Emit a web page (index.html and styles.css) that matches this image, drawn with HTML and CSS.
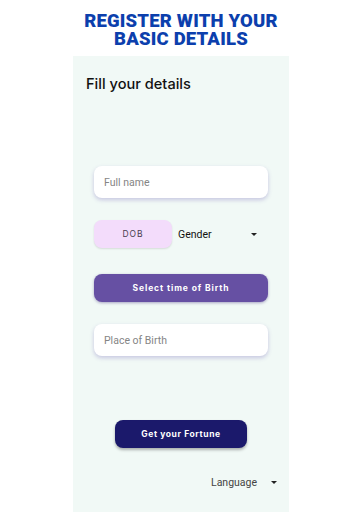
FILE: index.html
```html
<!DOCTYPE html>
<html lang="en">
<head>
  <meta charset="UTF-8" />
  <meta name="viewport" content="width=device-width, initial-scale=1.0" />
  <title>Register</title>
  <link rel="stylesheet" href="styles.css">
</head>
<body>
  <h1 class="title">REGISTER WITH YOUR<br>BASIC DETAILS</h1>
  <div class="panel">
    <h2 class="heading">Fill your details</h2>
    <div class="form">
      <input class="field" type="text" placeholder="Full name" />
      <div class="row">
        <button class="dob">DOB</button>
        <div class="select gender">
          <span>Gender</span>
          <span class="caret"></span>
        </div>
      </div>
      <button class="time-btn">Select time of Birth</button>
      <input class="field" type="text" placeholder="Place of Birth" />
    </div>
    <button class="fortune-btn">Get your Fortune</button>
    <div class="select language">
      <span>Language</span>
      <span class="caret"></span>
    </div>
  </div>
</body>
</html>
```

FILE: styles.css
```css
:root {
  --title: #0c3fad;
  --panel: #f1f9f6;
  --dob: #f3dcfb;
  --purple: #6650a3;
  --navy: #1b196b;
}
body {
  margin: 0;
  background: #fff;
  font-family: Roboto, "Noto Sans", sans-serif;
  color: #111;
}
.title {
  margin: 0;
  padding-top: 13px;
  text-align: center;
  font-family: Roboto, sans-serif;
  font-weight: 900;
  font-size: 18.5px;
  line-height: 17.5px;
  letter-spacing: 0.2px;
  color: var(--title);
}
.panel {
  width: 216px;
  margin: 8px 0 0 73px;
  min-height: 456px;
  background: var(--panel);
  box-sizing: border-box;
  padding: 18px 0 0;
}
.heading {
  margin: 0 0 0 13px;
  font-family: Inter, sans-serif;
  font-weight: 500;
  font-size: 14.6px;
  line-height: 20px;
}
.form {
  display: flex;
  flex-direction: column;
  margin: 72px 21px 0;
}
.field {
  height: 32px;
  border: none;
  border-radius: 8px;
  background: #fff;
  box-shadow: 0 2px 4px rgba(90, 70, 170, 0.28);
  padding: 0 10px;
  font-family: Roboto, sans-serif;
  font-size: 10.5px;
  color: #333;
  outline: none;
}
.field::placeholder {
  color: #858585;
}
.row {
  display: flex;
  align-items: center;
  gap: 6px;
  margin: 22px 0 26px;
}
button {
  border: none;
  cursor: pointer;
  font-family: Inter, sans-serif;
}
.dob {
  width: 78px;
  height: 28px;
  border-radius: 8px;
  background: var(--dob);
  font-size: 8.5px;
  letter-spacing: 1px;
  color: #4a4050;
  box-shadow: 0 1px 2px rgba(0, 0, 0, 0.12);
}
.select {
  display: flex;
  align-items: center;
  justify-content: space-between;
  font-family: Roboto, sans-serif;
  font-size: 10.5px;
}
.gender {
  flex: 1;
  padding-right: 11px;
  color: #111;
}
.caret {
  width: 0;
  height: 0;
  border-left: 3px solid transparent;
  border-right: 3px solid transparent;
  border-top: 3px solid #222;
}
.time-btn {
  height: 28px;
  border-radius: 8px;
  background: var(--purple);
  color: #fff;
  font-weight: 700;
  font-size: 8.5px;
  letter-spacing: 0.9px;
  box-shadow: 0 1px 3px rgba(60, 40, 120, 0.4);
  margin-bottom: 22px;
}
.fortune-btn {
  display: block;
  width: 132px;
  height: 28px;
  margin: 64px auto 0;
  border-radius: 8px;
  background: var(--navy);
  color: #fff;
  font-weight: 700;
  font-size: 8.5px;
  letter-spacing: 0.6px;
  box-shadow: 0 2px 3px rgba(0, 0, 0, 0.3);
}
.language {
  margin: 28px 12px 0 138px;
  color: #444;
}
```
